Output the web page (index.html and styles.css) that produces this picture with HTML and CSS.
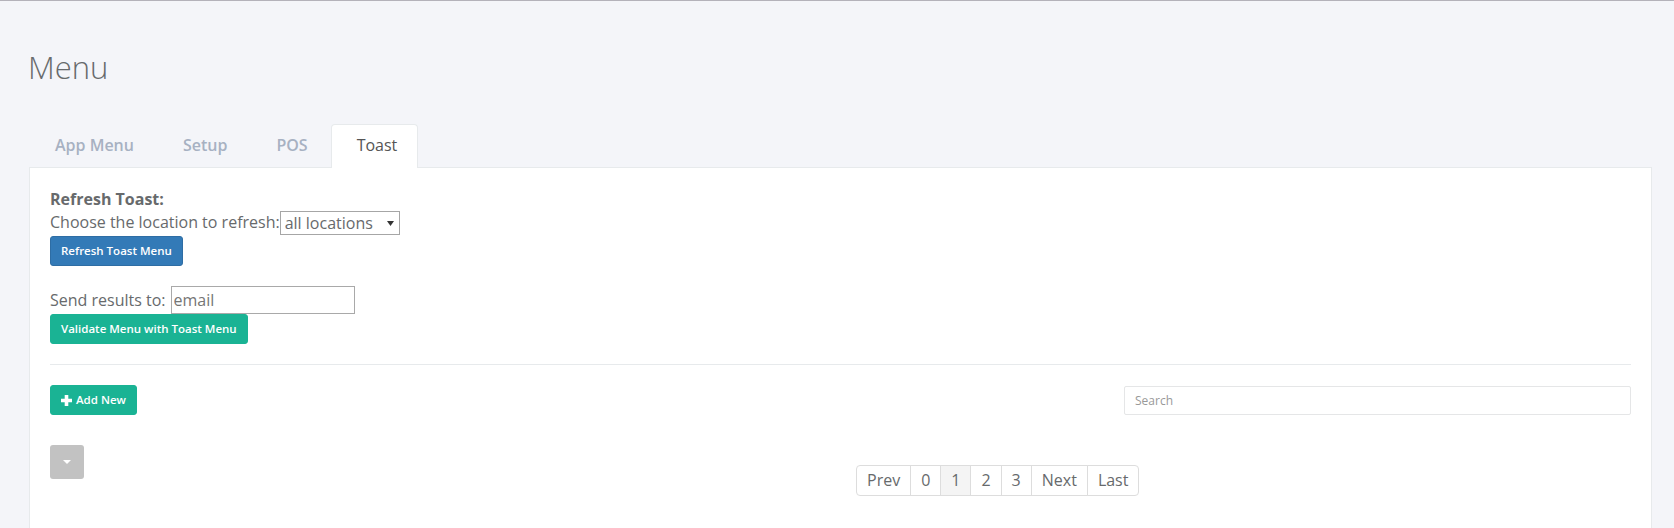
FILE: index.html
```html
<!DOCTYPE html>
<html>
<head>
<meta charset="utf-8">
<title>Menu</title>
<link rel="stylesheet" href="styles.css">
</head>
<body>
<div class="page">
  <h2 class="page-title">Menu</h2>
  <ul class="tabs">
    <li class="tab">App Menu</li>
    <li class="tab">Setup</li>
    <li class="tab">POS</li>
    <li class="tab active">Toast</li>
  </ul>
  <div class="panel">
    <div class="title">Refresh Toast:</div>
    <div class="choose-row">
      <span>Choose the location to refresh:</span>
      <span class="select-wrap">
        <select class="select"><option>all locations</option></select>
        <svg class="select-arrow" width="7" height="5" viewBox="0 0 7 5"><polygon points="0,0 7,0 3.5,5" fill="#333"/></svg>
      </span>
    </div>
    <button class="btn btn-blue btn-refresh">Refresh Toast Menu</button>

    <div class="send-row">
      <span>Send results to:</span>
      <input class="email" type="text" placeholder="email">
    </div>
    <button class="btn btn-green">Validate Menu with Toast Menu</button>

    <hr class="divider">

    <div class="toolbar">
      <button class="btn btn-green btn-add">
        <svg width="11" height="11" viewBox="0 0 11 11"><path d="M3.7 0h3.6v3.7H11v3.6H7.3V11H3.7V7.3H0V3.7h3.7z" fill="#fff"/></svg>
        <span>Add New</span>
      </button>
      <input class="search" type="text" placeholder="Search">
    </div>

    <div class="bottom-row">
      <button class="btn-gray"><svg width="8" height="4" viewBox="0 0 8 4"><polygon points="0,0 8,0 4,4" fill="#fff"/></svg></button>
      <ul class="pagination">
        <li class="page-item">Prev</li>
        <li class="page-item">0</li>
        <li class="page-item current">1</li>
        <li class="page-item">2</li>
        <li class="page-item">3</li>
        <li class="page-item">Next</li>
        <li class="page-item">Last</li>
      </ul>
    </div>
  </div>
</div>
</body>
</html>
```

FILE: styles.css
```css
* { box-sizing: border-box; }

html, body {
  margin: 0;
  padding: 0;
}

body {
  background: #f4f5f9;
  border-top: 1px solid #b4b2ba;
  font-family: "Open Sans", "Liberation Sans", sans-serif;
  font-size: 16px;
  line-height: 23px;
  color: #676a6c;
}

.page {
  padding: 0 22px 0 29px;
}

.page-title {
  margin: 49px 0 0 -1px;
  font-size: 31px;
  font-weight: 300;
  line-height: 34px;
  color: #676a6c;
}

.tabs {
  list-style: none;
  margin: 40px 0 0;
  padding: 0;
  display: flex;
  gap: 2px;
}

.tab {
  font-weight: 600;
  color: #a7b1c2;
  padding: 9px 20px 10px 25px;
  border: 1px solid transparent;
  border-bottom: none;
  border-radius: 4px 4px 0 0;
}

.tab.active {
  background: #fff;
  color: #555;
  font-weight: 400;
  border-color: #e7eaec;
  position: relative;
  z-index: 1;
  margin-bottom: -1px;
  padding-bottom: 11px;
}

.panel {
  background: #fff;
  border: 1px solid #e7eaec;
  padding: 20px 20px 60px;
}

.title {
  font-weight: 700;
}

.choose-row {
  display: flex;
  align-items: flex-start;
  height: 24px;
}

.select-wrap {
  position: relative;
  display: inline-block;
}

.select {
  appearance: none;
  -webkit-appearance: none;
  width: 120px;
  height: 24px;
  border: 1px solid #a6a6a6;
  border-radius: 0;
  background: #fff;
  padding: 0 0 0 4px;
  font-family: "Open Sans", "Liberation Sans", sans-serif;
  font-size: 16px;
  color: #676a6c;
}

.select-arrow {
  position: absolute;
  right: 6px;
  top: 10px;
  pointer-events: none;
}

.btn {
  display: block;
  height: 30px;
  padding: 0 10px;
  border: 1px solid transparent;
  border-radius: 3px;
  font-family: "Open Sans", "Liberation Sans", sans-serif;
  font-size: 11.5px;
  font-weight: 600;
  color: #fff;
  line-height: 28px;
}

.btn-refresh {
  margin-top: 1px;
}

.btn-blue {
  background: #337ab7;
  border-color: #2e6da4;
}

.btn-green {
  background: #1ab394;
  border-color: #1ab394;
}

.send-row {
  margin-top: 20px;
  display: flex;
  align-items: center;
  height: 28px;
}

.email {
  margin-left: 5px;
  width: 184px;
  height: 28px;
  border: 1px solid #a9a9a9;
  padding: 0 2px;
  font-family: "Open Sans", "Liberation Sans", sans-serif;
  font-size: 16px;
  color: #676a6c;
}

.email::placeholder {
  color: #757575;
}

.divider {
  margin: 20px 0;
  border: 0;
  border-top: 1px solid #e7eaec;
  height: 0;
}

.toolbar {
  display: flex;
  justify-content: space-between;
  align-items: flex-start;
}

.btn-add {
  display: flex;
  align-items: center;
  gap: 4px;
}

.search {
  width: 507px;
  height: 29px;
  margin-top: 1px;
  border: 1px solid #e5e6e7;
  border-radius: 2px;
  padding: 0 10px;
  font-family: "Open Sans", "Liberation Sans", sans-serif;
  font-size: 12px;
  color: #676a6c;
}

.search::placeholder {
  color: #999;
}

.bottom-row {
  margin-top: 30px;
  display: flex;
  align-items: flex-start;
}

.btn-gray {
  width: 34px;
  height: 34px;
  background: #c2c2c2;
  border: 0;
  border-radius: 3px;
  display: flex;
  align-items: center;
  justify-content: center;
  padding: 0;
}

.pagination {
  list-style: none;
  margin: 20px 0 0 772px;
  padding: 0;
  display: flex;
}

.page-item {
  border: 1px solid #dddddd;
  padding: 3px 10px;
  line-height: 23px;
  margin-left: -1px;
  color: #676a6c;
  background: #fff;
}

.page-item:first-child {
  margin-left: 0;
  border-radius: 4px 0 0 4px;
}

.page-item:last-child {
  border-radius: 0 4px 4px 0;
}

.page-item.current {
  background: #f4f4f4;
}
```
